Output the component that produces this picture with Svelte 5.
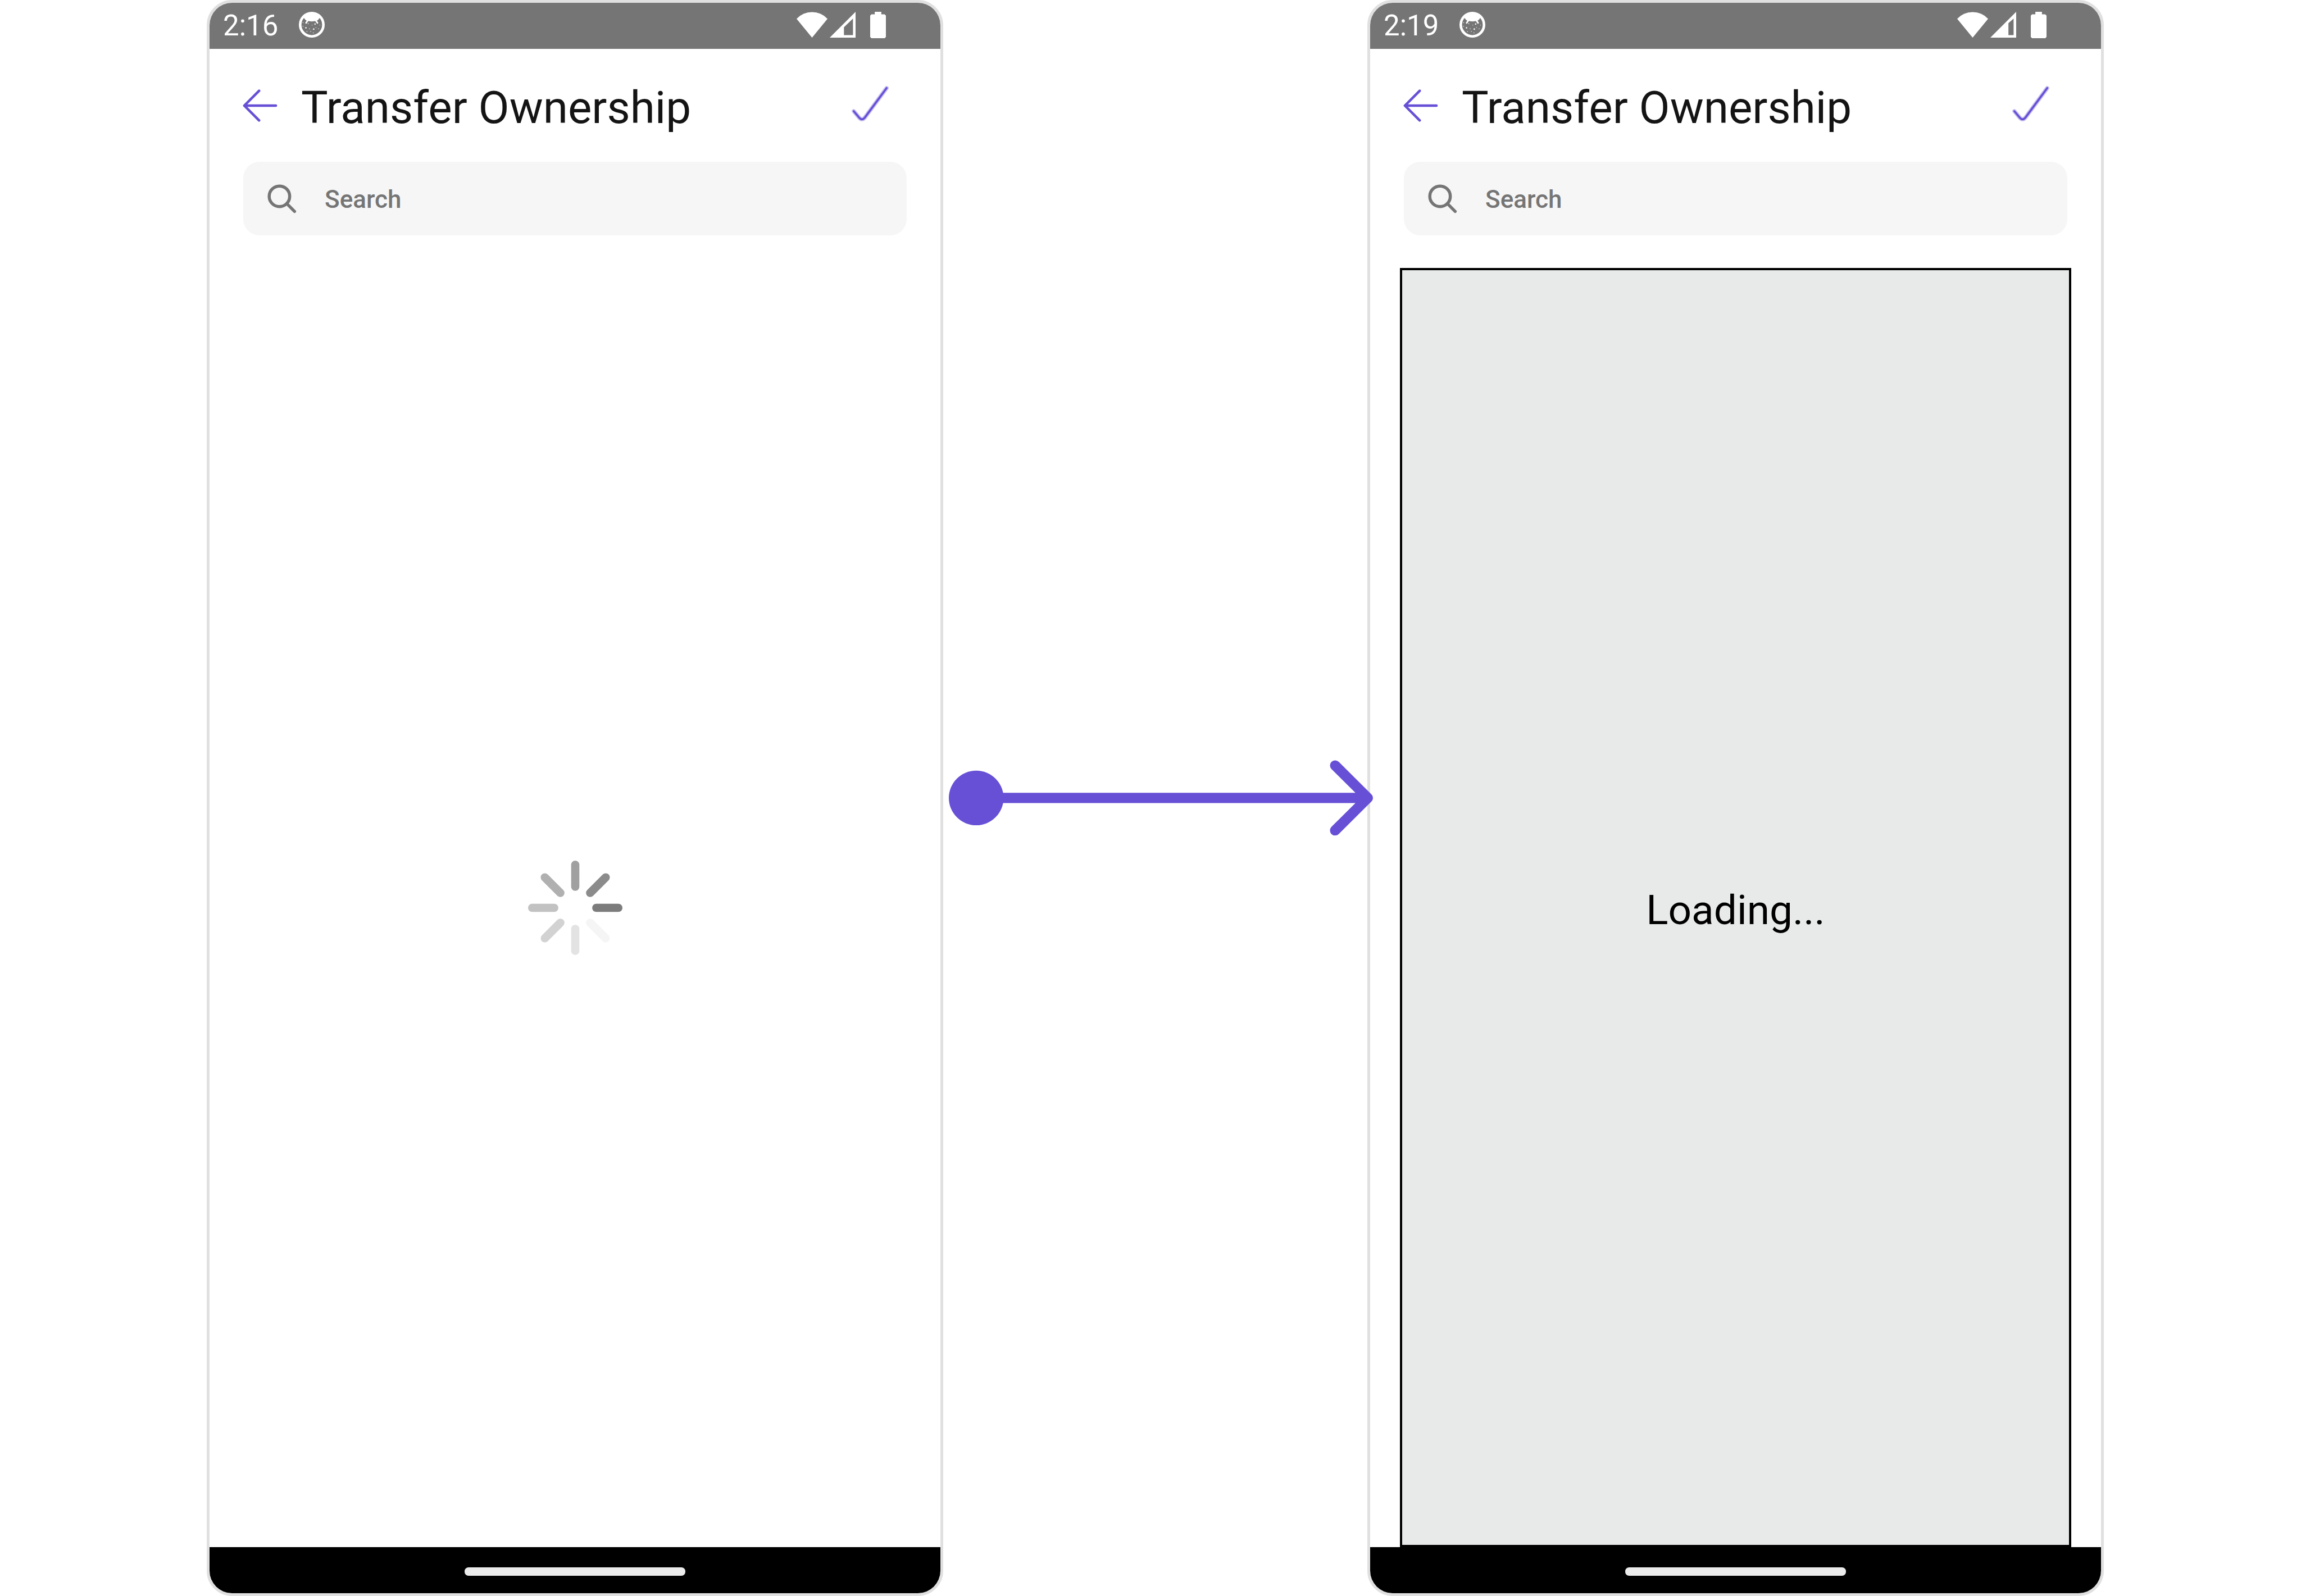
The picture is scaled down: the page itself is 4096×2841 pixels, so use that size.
<script>
  const phones = [
    { id: 'before', time: '2:16', loading: 'spinner', signalCut: 'M27.5 30L45 13V45H27.5Z' },
    { id: 'after', time: '2:19', loading: 'text', signalCut: 'M35 22L45 13V45H35Z' }
  ];

  const spokes = [
    { angle: 0, color: '#7c7c7c' },
    { angle: 45, color: '#f5f5f5' },
    { angle: 90, color: '#e3e3e3' },
    { angle: 135, color: '#d2d2d2' },
    { angle: 180, color: '#c2c2c2' },
    { angle: 225, color: '#b0b0b0' },
    { angle: 270, color: '#a0a0a0' },
    { angle: 315, color: '#8b8b8b' }
  ];

  const freckles = [
    [8, 21, 0.8], [8, 28, 0.8], [13.7, 31, 1.4], [18, 23, 0.9], [20.7, 33, 0.8],
    [25.7, 25.7, 0.6], [31.3, 23.7, 1.4], [40.7, 25.7, 0.7], [33, 30.3, 0.7],
    [28.7, 33.5, 1.5], [38, 33, 0.8], [15.7, 38, 0.8], [23, 38, 0.8], [28, 40.7, 0.8]
  ];
</script>

{#snippet phone(p)}
  <section class="phone {p.id}">
    <div class="status">
      <time>{p.time}</time>
      <svg class="face" viewBox="0 0 50 50" aria-hidden="true">
        <circle cx="25" cy="25" r="22.5" fill="none" stroke="#fff" stroke-width="5" />
        <path d="M6 10Q14 1 25 1T44 10L40 12Q37 17 34 17.5Q25 20 16 17.5Q13 17 10 12Z" fill="#fff" />
        <path d="M17 17L14 21.5M33 17L36 21.5" stroke="#fff" stroke-width="3" stroke-linecap="round" />
        {#each freckles as [x, y, r]}
          <circle cx={x} cy={y} {r} fill="#fff" />
        {/each}
      </svg>
      <div class="indicators">
        <svg class="wifi" viewBox="0 0 60 50" aria-hidden="true">
          <path d="M0 13.5A41 41 0 0 1 60 13.5L30 50Z" fill="#fff" />
        </svg>
        <svg class="signal" viewBox="0 0 50 50" aria-hidden="true">
          <path d="M0 50L50 0V50Z" fill="#fff" />
          <path d={p.signalCut} fill="#757575" />
        </svg>
        <svg class="battery" viewBox="0 0 31 52" aria-hidden="true">
          <path d="M9 0H22V5H28.5L31 7.5V49.5L28.5 52H2.5L0 49.5V7.5L2.5 5H9Z" fill="#fff" />
        </svg>
      </div>
    </div>

    <header>
      <button class="back" type="button" aria-label="Back">
        <svg viewBox="0 0 68 64">
          <path d="M65 32H3M32 3L3 32L32 61" />
        </svg>
      </button>
      <h1>Transfer Ownership</h1>
      <button class="confirm" type="button" aria-label="Confirm">
        <svg viewBox="0 0 70 70">
          <path class="soft" d="M3 48L13.5 60.5Q19 67 24.5 60.5L67 3" />
          <path d="M3 48L13.5 60.5Q19 67 24.5 60.5L67 3" />
        </svg>
      </button>
    </header>

    <label class="search" for="search-{p.id}">
      <svg viewBox="0 0 57 57" aria-hidden="true">
        <circle cx="23.5" cy="23.5" r="20" />
        <path d="M38 38L53 53" />
      </svg>
      <input id="search-{p.id}" type="search" placeholder="Search" aria-label="Search" />
    </label>

    <div class="content {p.loading}">
      {#if p.loading === 'spinner'}
        <svg viewBox="-92 -92 184 184" role="img" aria-label="Loading">
          {#each spokes as s}
            <line x1="41" x2="84" y1="0" y2="0" stroke={s.color} stroke-width="16" stroke-linecap="round" transform="rotate({s.angle})" />
          {/each}
        </svg>
      {:else}
        <p>Loading...</p>
      {/if}
    </div>

    <div class="nav"><span></span></div>
  </section>
{/snippet}

<main>
  {@render phone(phones[0])}
  <svg class="connector" viewBox="0 0 829 148" aria-hidden="true">
    <circle cx="53.5" cy="74" r="53.5" />
    <path d="M53 74H819M755 10.500L819 74L755 137.500" />
  </svg>
  {@render phone(phones[1])}
</main>

<style>
  :global(body) {
    margin: 0;
    background: #fff;
  }

  main {
    display: grid;
    grid-template-columns: 368fr 1311fr 755fr 1311fr 351fr;
    min-height: 100vh;
    font-family: Roboto, 'Liberation Sans', sans-serif;
  }

  .phone {
    display: flex;
    flex-direction: column;
    box-sizing: border-box;
    min-width: 0;
    border: 5px solid #e0e0e0;
    border-radius: 45px;
    overflow: hidden;
    background: #fff;
  }

  .before {
    grid-column: 2;
  }

  .after {
    grid-column: 4;
  }

  svg {
    display: block;
    flex: none;
  }

  .status {
    display: flex;
    align-items: center;
    height: 82px;
    padding: 0 97px 0 24px;
    background: #757575;
    color: #fff;
  }

  time {
    font-size: 51px;
    line-height: 60px;
  }

  .face {
    width: 46px;
    height: 46px;
    margin: 0 auto 4px 37px;
  }

  .indicators {
    display: flex;
    align-items: center;
    padding-bottom: 4px;
  }

  .wifi {
    width: 55px;
    height: 46px;
    margin-right: 4px;
  }

  .signal {
    width: 46px;
    height: 46px;
    margin-right: 26px;
  }

  .battery {
    width: 28px;
    height: 47px;
  }

  header {
    display: flex;
    align-items: center;
    height: 201px;
    padding: 0 93px 0 59px;
  }

  button {
    padding: 0;
    border: 0;
    background: none;
    cursor: pointer;
  }

  button path {
    fill: none;
    stroke: #6750d6;
    stroke-linecap: round;
    stroke-linejoin: round;
  }

  .back svg {
    width: 62px;
    height: 58px;
    stroke-width: 5px;
  }

  .confirm {
    padding-bottom: 4px;
  }

  .confirm svg {
    width: 64px;
    height: 64px;
    stroke-width: 4px;
    overflow: visible;
  }

  .confirm .soft {
    stroke-width: 8px;
    stroke-opacity: 0.35;
  }

  h1 {
    flex: 1;
    margin: 0 0 0 42px;
    padding-top: 8px;
    color: #141414;
    font-size: 80px;
    font-weight: 400;
    line-height: 94px;
    white-space: nowrap;
  }

  .search {
    display: flex;
    align-items: center;
    gap: 50px;
    height: 131px;
    margin: 0 60px;
    padding: 0 43px;
    border-radius: 29px;
    background: #f6f6f6;
  }

  .search svg {
    width: 52px;
    height: 52px;
    fill: none;
    stroke: #757575;
    stroke-width: 6px;
    stroke-linecap: round;
  }

  input {
    flex: 1;
    min-width: 0;
    padding: 2px 0 0;
    border: 0;
    outline: 0;
    appearance: none;
    background: none;
    color: #141414;
    font: 500 44px/52px Roboto, 'Liberation Sans', sans-serif;
  }

  input::placeholder {
    color: #757575;
    opacity: 1;
  }

  .content {
    display: flex;
    flex: 1;
    align-items: center;
    justify-content: center;
    margin: 58px 53px 0;
  }

  .content svg {
    width: 168px;
    height: 168px;
  }

  .text {
    border: 4px solid #000;
    background: #e8eae9;
  }

  p {
    margin: 0;
    padding-top: 8px;
    color: #000;
    font-size: 73px;
    line-height: 86px;
  }

  .nav {
    display: flex;
    align-items: center;
    justify-content: center;
    box-sizing: border-box;
    height: 82px;
    padding-top: 4px;
    background: #000;
  }

  .nav span {
    width: 393px;
    height: 15px;
    border-radius: 7px;
    background: #ebebeb;
  }

  .connector {
    z-index: 1;
    grid-column: 3;
    align-self: center;
    width: 100%;
    margin-left: 10px;
    fill: #6750d6;
  }

  .connector path {
    fill: none;
    stroke: #6750d6;
    stroke-width: 20px;
    stroke-linecap: round;
    stroke-linejoin: round;
  }
</style>
